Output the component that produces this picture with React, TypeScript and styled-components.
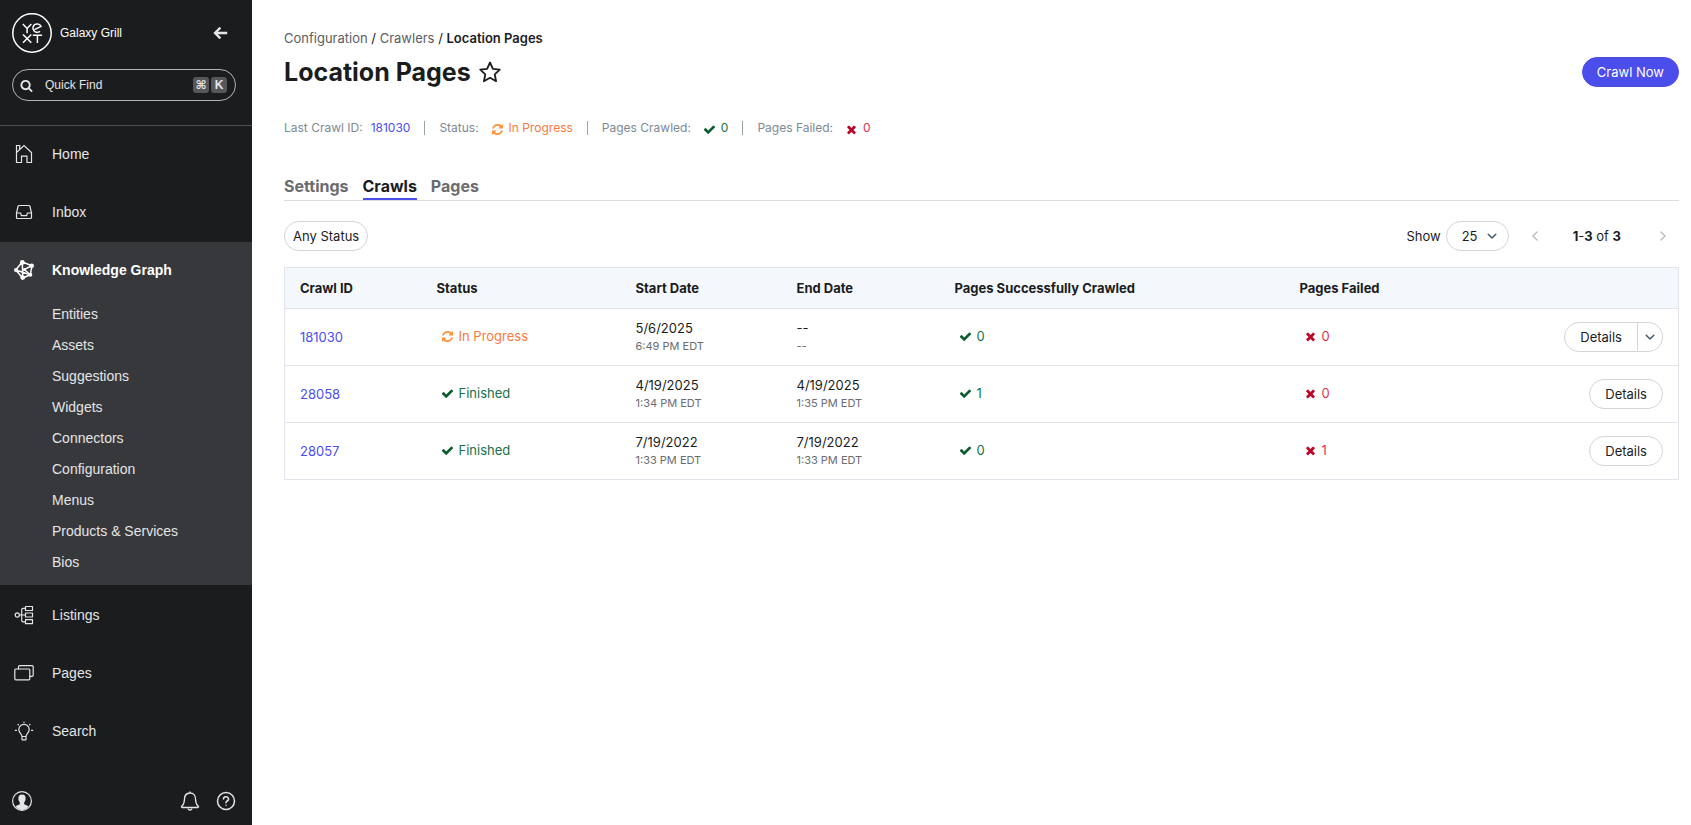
import React from "react";
import styled, { createGlobalStyle } from "styled-components";

const ink = "#1b1c1e";
const accent = "#4c4eec";
const line = "#e1e4ea";

const GlobalStyle = createGlobalStyle`
  *, *::before, *::after { box-sizing: border-box; }
  body {
    margin: 0;
    background: #fff;
    color: ${ink};
    font-family: Inter, "Liberation Sans", sans-serif;
    font-size: 13px;
    line-height: 16px;
  }
  button, input, select { font: inherit; color: inherit; }
  ul, ol { list-style: none; margin: 0; padding: 0; }
  a { text-decoration: none; }
`;

const Shell = styled.div`
  display: flex;
  min-height: 100vh;
`;

/* ---------- Sidebar ---------- */

const Sidebar = styled.aside`
  flex: none;
  width: 252px;
  display: flex;
  flex-direction: column;
  background: ${ink};
  color: #e4e5e6;
  font-family: "Liberation Sans", sans-serif;
`;

const Brand = styled.div`
  display: flex;
  align-items: center;
  gap: 8px;
  padding: 13px 24px 16px 12px;
  font-size: 12px;
`;

const BrandName = styled.span`
  flex: 1;
  color: #fff;
`;

const IconButton = styled.button`
  display: flex;
  padding: 0;
  border: 0;
  background: none;
  color: inherit;
  cursor: pointer;
`;

const QuickFind = styled.label`
  display: flex;
  align-items: center;
  gap: 2px;
  height: 32px;
  margin: 0 16px 24px 12px;
  padding: 0 8px 0 7px;
  border: 1px solid #b4b5b7;
  border-radius: 16px;
  font-size: 12px;
`;

const QuickInput = styled.input`
  flex: 1;
  min-width: 0;
  padding: 0 0 0 10px;
  border: 0;
  outline: 0;
  background: none;
  &::placeholder { color: #e4e5e6; opacity: 1; }
`;

const Key = styled.kbd`
  width: 16px;
  height: 16px;
  border-radius: 3px;
  background: #56575a;
  font: bold 12px/16px "Liberation Sans", "DejaVu Sans", sans-serif;
  text-align: center;
`;

const Nav = styled.nav`
  border-top: 1px solid #4e4f52;
`;

const NavLink = styled.a<{ $active?: boolean }>`
  display: flex;
  align-items: center;
  gap: 18px;
  padding: 18px 14px ${(p) => (p.$active ? 19 : 20)}px;
  color: ${(p) => (p.$active ? "#fff" : "#e4e5e6")};
  font-size: 14px;
  font-weight: ${(p) => (p.$active ? 700 : 400)};
  line-height: 20px;
`;

const NavGroup = styled.li`
  margin-bottom: 2px;
  padding-bottom: 7px;
  background: #37383c;
`;

const SubLink = styled.a`
  display: block;
  padding-left: 52px;
  color: #e4e5e6;
  font-size: 14px;
  line-height: 31px;
`;

const SideFooter = styled.div`
  display: flex;
  align-items: center;
  gap: 16px;
  margin-top: auto;
  padding: 14px 16px 14px 12px;
`;

const Grow = styled.span`
  flex: 1;
`;

/* ---------- Main ---------- */

const Main = styled.main`
  flex: 1;
  min-width: 0;
  padding: 30px 12px 32px 32px;
`;

const Crumb = styled.li`
  display: inline;
`;

const CrumbLink = styled.a`
  color: #5c5d60;
`;

const CrumbHere = styled.span`
  font-weight: 600;
`;

const TitleRow = styled.header`
  display: flex;
  align-items: center;
  gap: 7px;
  margin: 10px 0 33px;
`;

const Title = styled.h1`
  margin: 0;
  font-size: 25px;
  font-weight: 700;
  line-height: 32px;
`;

const Pill = styled.button<{ $primary?: boolean; $side?: "left" | "right"; $pad?: number }>`
  display: inline-flex;
  align-items: center;
  height: 30px;
  padding: 0 ${(p) => p.$pad ?? 15}px;
  border: 1px solid ${(p) => (p.$primary ? accent : "#d3d5d8")};
  border-radius: ${(p) => (p.$side === "left" ? "15px 0 0 15px" : p.$side === "right" ? "0 15px 15px 0" : "15px")};
  border-left-width: ${(p) => (p.$side === "right" ? 0 : 1)}px;
  background: ${(p) => (p.$primary ? accent : "#fff")};
  color: ${(p) => (p.$primary ? "#fff" : ink)};
  cursor: pointer;
`;

const Summary = styled.dl`
  display: flex;
  align-items: center;
  margin: 0 0 41px;
  font-size: 12px;
`;

const Fact = styled.div`
  display: flex;
  align-items: center;
  gap: 8px;
  height: 14px;
  & + & {
    margin-left: 14px;
    padding-left: 14px;
    border-left: 1px solid #9aa5ad;
  }
`;

const FactName = styled.dt`
  color: #7b8a95;
`;

const FactValue = styled.dd`
  display: flex;
  margin: 0;
`;

const tones = {
  orange: ["#ff9138", "#f87a3e"],
  green: ["#0a5c2c", "#17714a"],
  red: ["#b9062a", "#dc3350"],
};
type Tone = keyof typeof tones;

const MarkBox = styled.span<{ $tone: Tone }>`
  display: inline-flex;
  align-items: center;
  gap: 5px;
  padding-left: 4px;
  color: ${(p) => tones[p.$tone][1]};
  svg { color: ${(p) => tones[p.$tone][0]}; margin-top: 2px; }
`;

const Tabs = styled.nav`
  display: flex;
  gap: 14px;
  border-bottom: 1px solid #dcdde0;
`;

const Tab = styled.a<{ $on?: boolean }>`
  padding: 0 0 2px;
  border-bottom: 2px solid ${(p) => (p.$on ? accent : "transparent")};
  color: ${(p) => (p.$on ? ink : "#6b6c6f")};
  font-size: 16px;
  font-weight: 700;
  line-height: 20px;
`;

const Toolbar = styled.div`
  display: flex;
  align-items: center;
  justify-content: space-between;
  margin: 20px 0 16px;
`;

const Pager = styled.div`
  display: flex;
  align-items: center;
  padding-right: 9px;
`;

const PageSize = styled.label`
  display: flex;
  align-items: center;
  gap: 5px;
  position: relative;
  margin-right: 19px;
  svg { position: absolute; right: 10px; pointer-events: none; }
`;

const Select = styled.select`
  appearance: none;
  width: 63px;
  height: 30px;
  padding: 0 15px;
  border: 1px solid #d3d5d8;
  border-radius: 15px;
  background: #fff;
`;

const Range = styled.span`
  margin: 0 35px 0 31px;
`;

const Table = styled.table`
  width: 100%;
  table-layout: fixed;
  border-collapse: collapse;
  border: 1px solid ${line};
`;

const Col = styled.col<{ $w?: number }>`
  width: ${(p) => (p.$w ? `${p.$w}px` : "auto")};
`;

const Th = styled.th`
  height: 41px;
  padding: 0 15px;
  background: #f4f8fd;
  font-weight: 700;
  text-align: left;
`;

const Td = styled.td<{ $end?: boolean }>`
  height: 57px;
  padding: 0 15px;
  border-top: 1px solid ${line};
  text-align: ${(p) => (p.$end ? "right" : "left")};
`;

const IdLink = styled.a`
  color: ${accent};
`;

const Time = styled.div`
  margin-top: 2px;
  color: #6b6c6f;
  font-size: 11px;
`;

const ButtonGroup = styled.span`
  display: inline-flex;
  vertical-align: middle;
`;

/* ---------- Drawings ---------- */

const glyphs = {
  sync: "M1639 1056q0 5-1 7-64 268-268 434.5t-478 166.5q-146 0-282.5-55t-243.5-157l-129 129q-19 19-45 19t-45-19-19-45v-448q0-26 19-45t45-19h448q26 0 45 19t19 45-19 45l-137 137q71 66 161 102t187 36q134 0 250-65t186-179q11-17 53-117 8-23 30-23h192q13 0 22.5 9.5t9.5 22.5zm25-800v448q0 26-19 45t-45 19h-448q-26 0-45-19t-19-45 19-45l138-138q-148-137-349-137-134 0-250 65t-186 179q-11 17-53 117-8 23-30 23h-199q-13 0-22.5-9.5t-9.5-22.5v-7q65-268 270-434.5t480-166.5q146 0 284 55.5t245 156.5l130-129q19-19 45-19t45 19 19 45z",
  check: "M1671 566q0 40-28 68l-724 724-136 136q-28 28-68 28t-68-28l-136-136-362-362q-28-28-28-68t28-68l136-136q28-28 68-28t68 28l294 295 656-657q28-28 68-28t68 28l136 136q28 28 28 68z",
  cross: "M1490 1322q0 40-28 68l-136 136q-28 28-68 28t-68-28l-294-294-294 294q-28 28-68 28t-68-28l-136-136q-28-28-28-68t28-68l294-294-294-294q-28-28-28-68t28-68l136-136q28-28 68-28t68 28l294 294 294-294q28-28 68-28t68 28l136 136q28 28 28 68t-28 68l-294 294 294 294q28 28 28 68z",
  search: "M1216 832q0-185-131.5-316.5t-316.5-131.5-316.5 131.5-131.5 316.5 131.5 316.5 316.5 131.5 316.5-131.5 131.5-316.5zm512 832q0 52-38 90t-90 38q-54 0-90-38l-343-342q-179 124-399 124-143 0-273.5-55.5t-225-150-150-225-55.5-273.5 55.500-273.500 150-225 225-150 273.500-55.500 273.500 55.500 225 150 150 225 55.500 273.500q0 220-124 399l343 343q37 37 37 90z",
};

const Glyph = ({ name }: { name: keyof typeof glyphs }) => (
  <svg width="13" height="13" viewBox="0 0 1792 1792" fill="currentColor" aria-hidden="true">
    <path d={glyphs[name]} />
  </svg>
);

const Line = ({ children, size = 20, w = 1.2 }: { children: React.ReactNode; size?: number; w?: number }) => (
  <svg width={size} height={size} viewBox={`0 0 ${size} ${size}`} fill="none" stroke="currentColor" strokeWidth={w} strokeLinecap="round" strokeLinejoin="round" aria-hidden="true">
    {children}
  </svg>
);

const Logo = () => (
  <svg width="40" height="40" viewBox="0 0 40 40" fill="none" stroke="#fff" strokeWidth="1.5" aria-label="Yext">
    <circle cx="20" cy="20" r="19.2" />
    <path d="M10.8 11l4.300 4.400L19.300 11M15.100 15.400v4.800" />
    <path d="M28 18.200a4.200 4.200 0 1 1 1-4.800l-6.600 3.200" />
    <path d="M11 21.500l8.300 8.300M19.300 21.500L11 29.800M20.800 22.200h9.300M25.400 22.200v7.800" />
  </svg>
);

const HomeIcon = () => (
  <Line>
    <path d="M2.500 18.500V8.500L10 1.500l7.500 7v10h-4.500v-6.300H7.500v6.300zM2.500 8.500v-7h3.200V5" strokeLinejoin="miter" />
  </Line>
);
const InboxIcon = () => (
  <Line>
    <path d="M5.200 3.500h9.600q1 0 1.200 1l1.500 6.500v4.500q0 1-1 1h-13q-1 0-1-1V11L4 4.500q.2-1 1.200-1zM2.500 11h4l1 2.700h5l1-2.700h4" />
  </Line>
);
const GraphIcon = () => (
  <Line w={1.5}>
    <path d="M8.300 2L18 5.700l-1.700 9L8.700 18 1.700 10zM8.300 2l.4 16M18 5.700L10.300 9.500M10.300 9.500l6 5.200M1.700 10l14.600 4.700" />
    <g fill="currentColor" stroke="none">
      <circle cx="8.300" cy="2.400" r="2.400" /><circle cx="17.700" cy="5.700" r="2.300" /><circle cx="2" cy="10" r="2" />
      <circle cx="8.700" cy="17.600" r="2.400" /><circle cx="16.300" cy="14.700" r="2" /><circle cx="10.300" cy="9.500" r="1.500" />
    </g>
  </Line>
);
const ListingsIcon = () => (
  <Line>
    <circle cx="3.300" cy="10" r="2.100" />
    <path d="M5.400 10h6M11.400 3.300H9q-1.300 0-1.300 1.300v11q0 1.300 1.300 1.300h2.400" />
    <path d="M11.500 1.500h7v4h-7zM11.500 8h7v4h-7zM11.500 14.700h7v4h-7z" />
  </Line>
);
const PagesIcon = () => (
  <Line>
    <rect x=".8" y="6" width="15" height="10.800" rx="1" />
    <path d="M4.500 6V3.700q0-1 1-1h12.700q1 0 1 1v8.600q0 1-1 1h-2.400" />
  </Line>
);
const BulbIcon = () => (
  <Line>
    <path d="M8 15.300c0-2.300-3.200-3.300-3.200-6.700a5.200 5.200 0 0 1 10.400 0c0 3.400-3.200 4.400-3.200 6.700v3.500H8zM8 15.500h4" />
    <path d="M10 1v.6M1.300 9.300h1.200M17.500 9.300h1.200M4 3.300l.6.6M16 3.300l-.6.6" />
  </Line>
);
const AvatarIcon = () => (
  <Line>
    <circle cx="10" cy="10" r="9.400" />
    <path d="M10 3.500c-2.800 0-3.900 1.900-3.600 4.400.2 1.800.7 2.600 1.400 3.400v2c-1.400.9-3.300 1-4.300 2.300A9 9 0 0 0 10 19.200a9 9 0 0 0 6.500-3.600c-1-1.300-2.900-1.400-4.300-2.300v-2c.7-.8 1.200-1.600 1.400-3.400.3-2.500-.8-4.400-3.600-4.400z" fill="currentColor" stroke="none" />
  </Line>
);
const BellIcon = () => (
  <Line w={1.3}>
    <path d="M10 1v1M10 2C6.500 2 4.500 4.600 4.500 8c0 4.500-1.300 6-2.700 7.300-.6.600-.3 1.200.4 1.200h15.600c.7 0 1-.6.4-1.200C16.800 14 15.500 12.500 15.500 8c0-3.400-2-6-5.500-6zM8.300 18.300q1.700 1.500 3.400 0" />
  </Line>
);
const HelpIcon = () => (
  <Line w={1.5}>
    <circle cx="10" cy="10" r="8.500" />
    <path d="M7.500 8a2.500 2.300 0 1 1 3.700 2c-.8.500-1.200.9-1.200 1.700M10 14.200v.1" />
  </Line>
);
const BackIcon = () => (
  <Line size={16} w={2.3}>
    <path d="M15.200 8H3.500M8.400 2.600L3 8l5.400 5.400" strokeLinecap="butt" strokeLinejoin="miter" />
  </Line>
);
const StarIcon = () => (
  <Line size={24} w={1.8}>
    <path d="M12 2.500l2.900 6.300 6.900.8-5.100 4.700 1.400 6.900L12 17.800l-6.100 3.400 1.400-6.900-5.100-4.700 6.900-.8z" />
  </Line>
);
const Down = () => (
  <Line size={14} w={1.5}>
    <path d="M3.200 5.200L7 9l3.800-3.800" stroke="#435b6b" />
  </Line>
);
const Side = ({ next }: { next?: boolean }) => (
  <Line size={14} w={1.4}>
    <path d={next ? "M5 3l4 4-4 4" : "M9 3L5 7l4 4"} stroke="#b4bcc3" />
  </Line>
);

/* ---------- Content ---------- */

const Mark = ({ tone, children }: { tone: Tone; children: React.ReactNode }) => (
  <MarkBox $tone={tone}>
    <Glyph name={tone === "orange" ? "sync" : tone === "green" ? "check" : "cross"} />
    {children}
  </MarkBox>
);

const subItems = ["Entities", "Assets", "Suggestions", "Widgets", "Connectors", "Configuration", "Menus", "Products & Services", "Bios"];

const crawls = [
  { id: "181030", done: false, start: ["5/6/2025", "6:49 PM EDT"], end: ["--", "--"], ok: 0, failed: 0 },
  { id: "28058", done: true, start: ["4/19/2025", "1:34 PM EDT"], end: ["4/19/2025", "1:35 PM EDT"], ok: 1, failed: 0 },
  { id: "28057", done: true, start: ["7/19/2022", "1:33 PM EDT"], end: ["7/19/2022", "1:33 PM EDT"], ok: 0, failed: 1 },
];

const headings = ["Crawl ID", "Status", "Start Date", "End Date", "Pages Successfully Crawled", "Pages Failed", ""];
const columnWidths = [137, 199, 161, 158, 345, 190, undefined];

export default function App() {
  return (
    <Shell>
      <GlobalStyle />
      <Sidebar>
        <Brand>
          <Logo />
          <BrandName>Galaxy Grill</BrandName>
          <IconButton aria-label="Collapse menu"><BackIcon /></IconButton>
        </Brand>
        <QuickFind>
          <Glyph name="search" />
          <QuickInput type="text" placeholder="Quick Find" aria-label="Quick Find" />
          <Key>⌘</Key>
          <Key>K</Key>
        </QuickFind>
        <Nav>
          <ul>
            <li><NavLink href="#home"><HomeIcon />Home</NavLink></li>
            <li><NavLink href="#inbox"><InboxIcon />Inbox</NavLink></li>
            <NavGroup>
              <NavLink href="#graph" $active><GraphIcon />Knowledge Graph</NavLink>
              <ul>
                {subItems.map((item) => (
                  <li key={item}><SubLink href="#graph">{item}</SubLink></li>
                ))}
              </ul>
            </NavGroup>
            <li><NavLink href="#listings"><ListingsIcon />Listings</NavLink></li>
            <li><NavLink href="#pages"><PagesIcon />Pages</NavLink></li>
            <li><NavLink href="#search"><BulbIcon />Search</NavLink></li>
          </ul>
        </Nav>
        <SideFooter>
          <IconButton aria-label="Account"><AvatarIcon /></IconButton>
          <Grow />
          <IconButton aria-label="Notifications"><BellIcon /></IconButton>
          <IconButton aria-label="Help"><HelpIcon /></IconButton>
        </SideFooter>
      </Sidebar>

      <Main>
        <nav aria-label="Breadcrumb">
          <ol>
            <Crumb><CrumbLink href="#configuration">Configuration</CrumbLink> / </Crumb>
            <Crumb><CrumbLink href="#crawlers">Crawlers</CrumbLink> / </Crumb>
            <Crumb><CrumbHere>Location Pages</CrumbHere></Crumb>
          </ol>
        </nav>
        <TitleRow>
          <Title>Location Pages</Title>
          <IconButton aria-label="Favorite"><StarIcon /></IconButton>
          <Grow />
          <Pill $primary $pad={14}>Crawl Now</Pill>
        </TitleRow>

        <Summary>
          <Fact>
            <FactName>Last Crawl ID:</FactName>
            <FactValue><IdLink href="#181030">181030</IdLink></FactValue>
          </Fact>
          <Fact>
            <FactName>Status:</FactName>
            <FactValue><Mark tone="orange">In Progress</Mark></FactValue>
          </Fact>
          <Fact>
            <FactName>Pages Crawled:</FactName>
            <FactValue><Mark tone="green">0</Mark></FactValue>
          </Fact>
          <Fact>
            <FactName>Pages Failed:</FactName>
            <FactValue><Mark tone="red">0</Mark></FactValue>
          </Fact>
        </Summary>

        <Tabs>
          <Tab href="#settings">Settings</Tab>
          <Tab href="#crawls" $on>Crawls</Tab>
          <Tab href="#pages">Pages</Tab>
        </Tabs>

        <Toolbar>
          <Pill $pad={8}>Any Status</Pill>
          <Pager>
            <PageSize>
              Show
              <Select defaultValue="25">
                <option>25</option>
                <option>50</option>
              </Select>
              <Down />
            </PageSize>
            <IconButton aria-label="Previous page"><Side /></IconButton>
            <Range><b>1</b>-<b>3</b> of <b>3</b></Range>
            <IconButton aria-label="Next page"><Side next /></IconButton>
          </Pager>
        </Toolbar>

        <Table>
          <colgroup>
            {columnWidths.map((w, i) => <Col key={i} $w={w} />)}
          </colgroup>
          <thead>
            <tr>{headings.map((h) => <Th key={h}>{h}</Th>)}</tr>
          </thead>
          <tbody>
            {crawls.map((c) => (
              <tr key={c.id}>
                <Td><IdLink href={`#${c.id}`}>{c.id}</IdLink></Td>
                <Td><Mark tone={c.done ? "green" : "orange"}>{c.done ? "Finished" : "In Progress"}</Mark></Td>
                <Td>{c.start[0]}<Time>{c.start[1]}</Time></Td>
                <Td>{c.end[0]}<Time>{c.end[1]}</Time></Td>
                <Td><Mark tone="green">{c.ok}</Mark></Td>
                <Td><Mark tone="red">{c.failed}</Mark></Td>
                <Td $end>
                  <ButtonGroup>
                    <Pill $side={c.done ? undefined : "left"}>Details</Pill>
                    {!c.done && <Pill $side="right" $pad={5} aria-label="More actions"><Down /></Pill>}
                  </ButtonGroup>
                </Td>
              </tr>
            ))}
          </tbody>
        </Table>
      </Main>
    </Shell>
  );
}
